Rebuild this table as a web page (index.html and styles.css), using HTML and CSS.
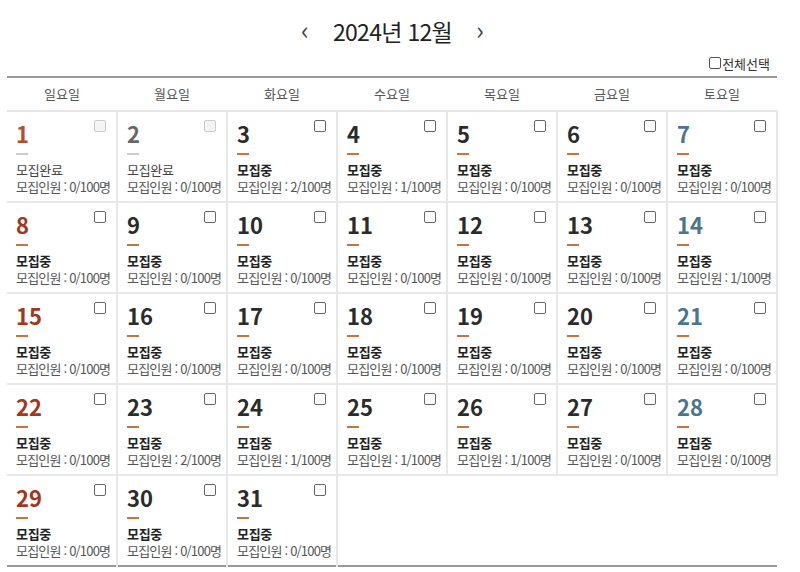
FILE: index.html
```html
<!DOCTYPE html>
<html lang="ko">
<head>
<meta charset="utf-8">
<link rel="stylesheet" href="styles.css">
</head>
<body>
<div class="wrap">
  <div class="title">
    <span class="arrow">&lsaquo;</span>
    <span class="month">2024년 12월</span>
    <span class="arrow">&rsaquo;</span>
  </div>
  <div class="selall"><span class="box"></span>전체선택</div>
  <table class="cal">
    <thead>
      <tr><th>일요일</th><th>월요일</th><th>화요일</th><th>수요일</th><th>목요일</th><th>금요일</th><th>토요일</th></tr>
    </thead>
    <tbody>
      <tr>
        <td><div class="cell done"><span class="num sun">1</span><span class="cb"></span><i class="dash"></i><b class="st">모집완료</b><span class="cnt">모집인원 : 0/100명</span></div></td>
        <td><div class="cell done"><span class="num grey">2</span><span class="cb"></span><i class="dash"></i><b class="st">모집완료</b><span class="cnt">모집인원 : 0/100명</span></div></td>
        <td><div class="cell"><span class="num">3</span><span class="cb"></span><i class="dash"></i><b class="st">모집중</b><span class="cnt">모집인원 : 2/100명</span></div></td>
        <td><div class="cell"><span class="num">4</span><span class="cb"></span><i class="dash"></i><b class="st">모집중</b><span class="cnt">모집인원 : 1/100명</span></div></td>
        <td><div class="cell"><span class="num">5</span><span class="cb"></span><i class="dash"></i><b class="st">모집중</b><span class="cnt">모집인원 : 0/100명</span></div></td>
        <td><div class="cell"><span class="num">6</span><span class="cb"></span><i class="dash"></i><b class="st">모집중</b><span class="cnt">모집인원 : 0/100명</span></div></td>
        <td><div class="cell"><span class="num sat">7</span><span class="cb"></span><i class="dash"></i><b class="st">모집중</b><span class="cnt">모집인원 : 0/100명</span></div></td>
      </tr>
      <tr>
        <td><div class="cell"><span class="num sun">8</span><span class="cb"></span><i class="dash"></i><b class="st">모집중</b><span class="cnt">모집인원 : 0/100명</span></div></td>
        <td><div class="cell"><span class="num">9</span><span class="cb"></span><i class="dash"></i><b class="st">모집중</b><span class="cnt">모집인원 : 0/100명</span></div></td>
        <td><div class="cell"><span class="num">10</span><span class="cb"></span><i class="dash"></i><b class="st">모집중</b><span class="cnt">모집인원 : 0/100명</span></div></td>
        <td><div class="cell"><span class="num">11</span><span class="cb"></span><i class="dash"></i><b class="st">모집중</b><span class="cnt">모집인원 : 0/100명</span></div></td>
        <td><div class="cell"><span class="num">12</span><span class="cb"></span><i class="dash"></i><b class="st">모집중</b><span class="cnt">모집인원 : 0/100명</span></div></td>
        <td><div class="cell"><span class="num">13</span><span class="cb"></span><i class="dash"></i><b class="st">모집중</b><span class="cnt">모집인원 : 0/100명</span></div></td>
        <td><div class="cell"><span class="num sat">14</span><span class="cb"></span><i class="dash"></i><b class="st">모집중</b><span class="cnt">모집인원 : 1/100명</span></div></td>
      </tr>
      <tr>
        <td><div class="cell"><span class="num sun">15</span><span class="cb"></span><i class="dash"></i><b class="st">모집중</b><span class="cnt">모집인원 : 0/100명</span></div></td>
        <td><div class="cell"><span class="num">16</span><span class="cb"></span><i class="dash"></i><b class="st">모집중</b><span class="cnt">모집인원 : 0/100명</span></div></td>
        <td><div class="cell"><span class="num">17</span><span class="cb"></span><i class="dash"></i><b class="st">모집중</b><span class="cnt">모집인원 : 0/100명</span></div></td>
        <td><div class="cell"><span class="num">18</span><span class="cb"></span><i class="dash"></i><b class="st">모집중</b><span class="cnt">모집인원 : 0/100명</span></div></td>
        <td><div class="cell"><span class="num">19</span><span class="cb"></span><i class="dash"></i><b class="st">모집중</b><span class="cnt">모집인원 : 0/100명</span></div></td>
        <td><div class="cell"><span class="num">20</span><span class="cb"></span><i class="dash"></i><b class="st">모집중</b><span class="cnt">모집인원 : 0/100명</span></div></td>
        <td><div class="cell"><span class="num sat">21</span><span class="cb"></span><i class="dash"></i><b class="st">모집중</b><span class="cnt">모집인원 : 0/100명</span></div></td>
      </tr>
      <tr>
        <td><div class="cell"><span class="num sun">22</span><span class="cb"></span><i class="dash"></i><b class="st">모집중</b><span class="cnt">모집인원 : 0/100명</span></div></td>
        <td><div class="cell"><span class="num">23</span><span class="cb"></span><i class="dash"></i><b class="st">모집중</b><span class="cnt">모집인원 : 2/100명</span></div></td>
        <td><div class="cell"><span class="num">24</span><span class="cb"></span><i class="dash"></i><b class="st">모집중</b><span class="cnt">모집인원 : 1/100명</span></div></td>
        <td><div class="cell"><span class="num">25</span><span class="cb"></span><i class="dash"></i><b class="st">모집중</b><span class="cnt">모집인원 : 1/100명</span></div></td>
        <td><div class="cell"><span class="num">26</span><span class="cb"></span><i class="dash"></i><b class="st">모집중</b><span class="cnt">모집인원 : 1/100명</span></div></td>
        <td><div class="cell"><span class="num">27</span><span class="cb"></span><i class="dash"></i><b class="st">모집중</b><span class="cnt">모집인원 : 0/100명</span></div></td>
        <td><div class="cell"><span class="num sat">28</span><span class="cb"></span><i class="dash"></i><b class="st">모집중</b><span class="cnt">모집인원 : 0/100명</span></div></td>
      </tr>
      <tr>
        <td><div class="cell"><span class="num sun">29</span><span class="cb"></span><i class="dash"></i><b class="st">모집중</b><span class="cnt">모집인원 : 0/100명</span></div></td>
        <td><div class="cell"><span class="num">30</span><span class="cb"></span><i class="dash"></i><b class="st">모집중</b><span class="cnt">모집인원 : 0/100명</span></div></td>
        <td><div class="cell"><span class="num">31</span><span class="cb"></span><i class="dash"></i><b class="st">모집중</b><span class="cnt">모집인원 : 0/100명</span></div></td>
        <td class="empty"></td>
        <td class="empty"></td>
        <td class="empty"></td>
        <td class="empty"></td>
      </tr>
    </tbody>
  </table>
</div>
</body>
</html>
```

FILE: styles.css
```css
html, body {
  margin: 0;
  padding: 0;
  background: #fff;
}
body {
  font-family: "Noto Sans CJK KR", "Noto Sans", sans-serif;
  color: #333;
}
.wrap {
  width: 771px;
  margin-left: 7px;
}
.title {
  display: flex;
  justify-content: center;
  align-items: center;
  gap: 24px;
  height: 40px;
  margin-top: 11px;
}
.month {
  font-size: 23px;
  color: #222;
  letter-spacing: -0.7px;
}
.arrow {
  font-size: 26px;
  color: #444;
  line-height: 1;
  margin-top: -4px;
}
.selall {
  display: flex;
  justify-content: flex-end;
  align-items: center;
  font-size: 13px;
  color: #333;
  height: 18px;
  margin-top: 3px;
  margin-right: 8px;
  margin-bottom: 4px;
}
.selall .box {
  width: 10px;
  height: 10px;
  border: 1px solid #555;
  border-radius: 2px;
  margin-right: 1px;
}
.cal {
  width: 771px;
  border-collapse: collapse;
  table-layout: fixed;
  border-top: 2px solid #999;
  border-bottom: 2px solid #999;
}
.cal th {
  height: 30px;
  font-weight: normal;
  font-size: 13px;
  color: #555;
  border-bottom: 2px solid #e6e6e6;
  padding: 0 0 2px 0;
}
.cal td {
  height: 89px;
  padding: 0;
  border: 2px solid #e8e8e8;
  vertical-align: top;
}
.cal tr:last-child td {
  border-bottom: none;
}
.cal td:first-child {
  border-left: none;
}
.cal td.empty {
  border: none;
}
.cell {
  position: relative;
  display: flex;
  flex-direction: column;
  align-items: flex-start;
  padding: 8px 0 0 9px;
  white-space: nowrap;
}
.num {
  font-size: 22px;
  font-weight: bold;
  line-height: 26px;
  color: #2b2b2b;
}
.num.sun { color: #a3361d; }
.num.sat { color: #4a7591; }
.done .num.sun { color: #b2502f; }
.num.grey { color: #666; }
.cb {
  position: absolute;
  top: 8px;
  right: 10px;
  width: 10px;
  height: 10px;
  border: 1px solid #666;
  border-radius: 2px;
  background: #fff;
}
.done .cb {
  border-color: #ccc;
  background: #f4f4f4;
}
.dash {
  display: block;
  width: 12px;
  height: 2px;
  background: #c8743f;
  margin-top: 7px;
  margin-bottom: 6px;
}
.done .dash {
  background: #ccc;
}
.st {
  font-size: 13px;
  font-weight: bold;
  color: #222;
  line-height: 17px;
  letter-spacing: -0.3px;
}
.done .st {
  font-weight: normal;
  color: #444;
}
.cnt {
  font-size: 13px;
  color: #555;
  line-height: 17px;
  letter-spacing: -0.8px;
}
```
